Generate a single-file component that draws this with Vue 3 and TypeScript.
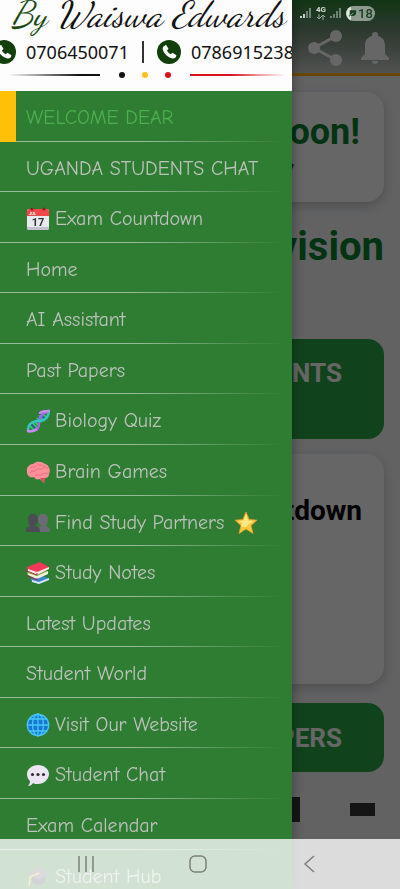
<script setup lang="ts">
import { ref } from 'vue'

interface MenuItem {
  label: string
  icon?: string
  trailing?: string
}

const active = ref('WELCOME DEAR')

const items: MenuItem[] = [
  { label: 'WELCOME DEAR' },
  { label: 'UGANDA STUDENTS CHAT' },
  { label: 'Exam Countdown', icon: 'calendar' },
  { label: 'Home' },
  { label: 'AI Assistant' },
  { label: 'Past Papers' },
  { label: 'Biology Quiz', icon: 'dna' },
  { label: 'Brain Games', icon: 'brain' },
  { label: 'Find Study Partners', icon: 'people', trailing: 'star' },
  { label: 'Study Notes', icon: 'books' },
  { label: 'Latest Updates' },
  { label: 'Student World' },
  { label: 'Visit Our Website', icon: 'globe' },
  { label: 'Student Chat', icon: 'chat' },
  { label: 'Exam Calendar' },
  { label: 'Student Hub', icon: 'cap' },
]
</script>

<template>
  <div class="app">
    <header class="topbar">
      <button class="icon-btn" aria-label="Share">
        <svg width="36" height="38" viewBox="0 0 36 38">
          <path d="M29 7 7 19l22 12" fill="none" stroke="#fff" stroke-width="3" />
          <circle cx="29" cy="7" r="6" fill="#fff" />
          <circle cx="7" cy="19" r="6" fill="#fff" />
          <circle cx="29" cy="31" r="6" fill="#fff" />
        </svg>
      </button>
      <button class="icon-btn" aria-label="Notifications">
        <svg width="28" height="32" viewBox="0 0 28 32">
          <path d="M14 0c2 0 3 1.300 3 3v1c5 1.300 7 5 7 10v8l4 4v2H0v-2l4-4v-8c0-5 2-8.700 7-10V3c0-1.700 1-3 3-3zM11 29h6c0 2-1.300 3-3 3s-3-1-3-3z" fill="#fff" />
        </svg>
      </button>
    </header>

    <main class="page">
      <section class="card greeting">
        <h1>Afternoon!</h1>
        <p>today</p>
      </section>
      <h2 class="headline">Revision</h2>
      <button class="action tall">STUDENTS</button>
      <section class="card countdown">
        <h3>Countdown</h3>
      </section>
      <button class="action">PAPERS</button>
      <div class="blocks"><i class="block square"></i><i class="block flat"></i></div>
    </main>

    <div class="scrim"></div>

    <aside class="drawer">
      <div class="banner">
        <div class="signature"><span>By</span> Waiswa Edwards</div>
        <div class="phones">
          <svg class="call" width="24" height="24" viewBox="0 0 24 24">
            <circle cx="12" cy="12" r="12" fill="#123f0b" />
            <path d="M6.500 6.500 9 4.800l2.500 4-1.500 1.800c.8 1.700 2 2.900 3.700 3.600l1.800-1.500 3.900 2.500c-.4 2.600-2.200 3.700-4.600 3C10.400 17 7 13.600 5.800 9.400c-.2-1.200 0-2.100.7-2.900z" fill="#fff" />
          </svg>
          <a href="tel:0706450071">0706450071</a>
          <i class="rule"></i>
          <svg class="call" width="24" height="24" viewBox="0 0 24 24">
            <circle cx="12" cy="12" r="12" fill="#123f0b" />
            <path d="M6.500 6.500 9 4.800l2.500 4-1.500 1.800c.8 1.700 2 2.900 3.700 3.600l1.800-1.500 3.900 2.500c-.4 2.600-2.200 3.700-4.600 3C10.400 17 7 13.600 5.800 9.400c-.2-1.200 0-2.100.7-2.900z" fill="#fff" />
          </svg>
          <a href="tel:0786915238">0786915238</a>
        </div>
        <svg class="flourish" width="292" height="8" viewBox="0 0 292 8">
          <path d="M8 4 80 3h20v2H80z" fill="#111" />
          <circle cx="122" cy="4" r="3" fill="#111" />
          <circle cx="145" cy="4" r="3" fill="#fcc21b" />
          <circle cx="168" cy="4" r="3" fill="#d8121c" />
          <path d="M190 3h40l56 1-56 1h-40z" fill="#d8121c" />
        </svg>
      </div>

      <nav aria-label="Main menu">
        <ul class="menu">
          <li v-for="item in items" :key="item.label" :class="{ active: item.label === active }">
            <a href="#" @click.prevent="active = item.label">
              <svg v-if="item.icon" class="emoji" viewBox="0 0 24 24">
                <g v-if="item.icon === 'calendar'">
                  <rect x="1" y="2" width="22" height="21" rx="2" fill="#e9e9f0" />
                  <path d="M1 9V4q0-2 2-2h18q2 0 2 2v5z" fill="#f4474b" />
                  <path d="M1 20h22v1q0 2-2 2H3q-2 0-2-2z" fill="#c3c3cf" />
                  <circle cx="6" cy="2" r="1.500" fill="#8d1d24" />
                  <circle cx="18" cy="2" r="1.500" fill="#8d1d24" />
                  <text x="3" y="8" font-size="4" font-weight="700" fill="#fff">JUL</text>
                  <text x="12" y="19" font-size="11" font-weight="700" text-anchor="middle" fill="#333">17</text>
                </g>
                <g v-else-if="item.icon === 'dna'" fill="none" stroke-linecap="round">
                  <path d="m4 17 4 4M7 14l4 5M13 7l5 5M16 4l4 4M11 9l4 4M9 13l4 4" stroke="#3ad06d" stroke-width="1.500" />
                  <path d="m5 15 5 5M14 5l5 5M12 8l5 4" stroke="#3352c8" stroke-width="1.500" />
                  <path d="M2 22c7 1 11-1 11-8 0-6 3-10 10-12" stroke="#9c6be0" stroke-width="2.400" />
                  <path d="M2 22c0-7 3-9 9-10 7 0 11-2 12-10" stroke="#34c6c1" stroke-width="2.400" />
                  <path d="M2 22c3 .5 6 0 8-1.500M14 4c2-2 5-2 9-2" stroke="#c98af0" stroke-width="2.400" />
                </g>
                <g v-else-if="item.icon === 'brain'">
                  <path d="M1 12C0 8 3 4 7 4c4-4 10-2 12 0 4 1 6 6 4 10 0 3-2 4-4 4l-1 5-4-4c-3 1-5 0-6-2-4 1-7-1-7-5z" fill="#ff8f98" />
                  <path d="M4 13c2-4 4 0 6-3s5 1 7-2 3 1 5 0M5 7c2-1 3 1 5-1M12 4c1 3 4 0 6 2M9 16c2-3 5 1 8-2 2-1 3 0 5-1" fill="none" stroke="#e0677a" stroke-width=".9" stroke-linecap="round" />
                  <path d="m14 18 5 0-1 5z" fill="#d94a60" />
                </g>
                <g v-else-if="item.icon === 'people'">
                  <path d="M11 21c0-4 1-5 4-6-2-2-3-4-3-7 0-3 2-5 5-5s5 2 5 5-1 5-2 7c3 1 4 2 4 6z" fill="#6b6b73" />
                  <path d="M0 21c0-4 1-5 4-6-2-2-2-4-2-7 0-3 2-5 5-5s5 2 5 5-1 5-3 7c4 1 5 2 5 6z" fill="#4c4c54" />
                </g>
                <g v-else-if="item.icon === 'books'">
                  <path d="m5 17 12-2 7 3-11 5-8-3z" fill="#3b86cf" />
                  <path d="m6 19 7 2 10-4v2l-10 4-7-2z" fill="#d9e9f6" />
                  <path d="m1 11 12-3 10 3-12 6-10-3z" fill="#7ba13a" />
                  <path d="m2 12 9 3 11-5v3l-11 5-9-4z" fill="#eef2dc" />
                  <path d="M1 6 14 1l9 5-12 6L1 9z" fill="#ee3957" />
                  <path d="m2 8 9 3 12-5v2l-12 6-9-3z" fill="#f7e5e3" />
                  <path d="M1 9v1l10 4v-2M2 14v1l9 4v-2" fill="none" stroke="#a42d3f" />
                </g>
                <g v-else-if="item.icon === 'globe'">
                  <circle cx="12" cy="12" r="11" fill="#1777d1" />
                  <g fill="none" stroke="#48c7f7" stroke-width="1.300">
                    <circle cx="12" cy="12" r="10.700" />
                    <ellipse cx="12" cy="12" rx="5.500" ry="11" />
                    <path d="M12 1v22M1 12h22M3 6h18M3 18h18" />
                  </g>
                </g>
                <g v-else-if="item.icon === 'chat'">
                  <path d="M12 2c6 0 11 4 11 9s-5 10-11 10c-2 0-4 0-5-1-1 2-3 3-5 3 1-1 2-3 2-5-2-2-3-4-3-7 0-5 5-9 11-9z" fill="#ece6f3" />
                  <circle cx="6.500" cy="11.500" r="1.600" fill="#33303a" />
                  <circle cx="12" cy="11.500" r="1.600" fill="#33303a" />
                  <circle cx="17.500" cy="11.500" r="1.600" fill="#33303a" />
                </g>
                <g v-else-if="item.icon === 'cap'">
                  <path d="M6 10v7c3 4 10 4 13 0v-7z" fill="#3d3d45" />
                  <path d="M0 8 13 2l11 6-11 7z" fill="#5c5c66" />
                  <path d="m13 8-9 4-1 9" fill="none" stroke="#f0a91d" stroke-width="1.500" />
                </g>
              </svg>
              <span>{{ item.label }}</span>
              <svg v-if="item.trailing" class="emoji trailing" viewBox="0 0 24 24">
                <path d="m12 1 3.200 7.500 7.800.7-6 5.300 2 8-7-4.500L5 22.500l2-8-6-5.300 7.800-.7z" fill="#fdc93a" stroke="#f09c2c" stroke-width=".8" stroke-linejoin="round" />
                <path d="m12 3 2.300 6.500 5 .7-5 3-2.300 3-5-1 1.500-3-4-2 5-.7z" fill="#ffe887" />
              </svg>
            </a>
          </li>
        </ul>
      </nav>
    </aside>

    <div class="status">
      <svg width="12" height="12" viewBox="0 0 12 12">
        <path d="M1 11V9M4 11V7" stroke="#fff" stroke-width="1.500" />
        <path d="M7 11V4M10 11V1" stroke="#8b9a8d" stroke-width="1.500" />
      </svg>
      <div class="network">
        <b>4G</b>
        <svg width="10" height="6" viewBox="0 0 10 6"><path d="M3 0v5M1 3l2 2 2-2M7 6V1M5 3l2-2 2 2" fill="none" stroke="#9aa89b" /></svg>
      </div>
      <svg width="12" height="12" viewBox="0 0 12 12">
        <path d="M1 11V9M4 11V7M7 11V4M10 11V1" stroke="#8b9a8d" stroke-width="1.500" />
      </svg>
      <div class="battery">
        <svg width="9" height="9" viewBox="0 0 10 9"><path d="M2 1h7v3c0 3-3 4-6 3L1 8l1-3z" fill="#17401c" /><path d="m2 7 4-3" stroke="#a3ada3" /></svg>
        <span>18</span>
      </div>
    </div>

    <div class="sysnav">
      <button aria-label="Recent apps">
        <svg width="18" height="18" viewBox="0 0 18 18"><path d="M2 1v16M9 1v16M16 1v16" stroke="#7c807c" stroke-width="1.500" /></svg>
      </button>
      <button aria-label="Home">
        <svg width="18" height="18" viewBox="0 0 18 18"><rect x="1" y="1" width="16" height="16" rx="5" fill="none" stroke="#7c807c" stroke-width="1.500" /></svg>
      </button>
      <button aria-label="Back">
        <svg width="18" height="18" viewBox="0 0 18 18"><path d="M13 1 4 9l9 8" fill="none" stroke="#7c807c" stroke-width="1.500" /></svg>
      </button>
    </div>
  </div>
</template>

<style>
body {
  background: #f4f5f8;
}
</style>

<style scoped>
* {
  box-sizing: border-box;
}
button {
  border: 0;
  padding: 0;
  background: none;
  font: inherit;
}
svg {
  display: block;
  flex: none;
}
h1,
h2,
h3,
p {
  margin: 0;
  font-weight: 700;
}
.app {
  height: 100vh;
  overflow: hidden;
  font-family: Roboto, sans-serif;
}
.topbar {
  display: flex;
  justify-content: flex-end;
  align-items: flex-end;
  gap: 18px;
  height: 76px;
  padding: 0 11px 6px;
  border-bottom: 3px solid #ffb300;
  background: linear-gradient(#2b8635, #7e9482 50%, #cacdca);
}
.icon-btn {
  display: flex;
  align-items: center;
  height: 38px;
}
.page {
  display: flex;
  flex-direction: column;
  padding: 16px;
  text-align: right;
}
.card {
  border-radius: 18px;
  background: #fff;
  box-shadow: 0 4px 12px rgba(0, 0, 0, 0.2);
}
.greeting {
  height: 110px;
  padding: 18px 24px;
  color: #08802d;
}
.greeting h1 {
  font-size: 36px;
  line-height: 44px;
}
.greeting p {
  padding-right: 66px;
  color: #333;
  font-size: 18px;
  font-weight: 400;
  line-height: 28px;
}
.headline {
  margin: 20px 0 68px;
  color: #08802d;
  font-size: 40px;
  line-height: 49px;
}
.action {
  height: 69px;
  padding: 0 42px;
  border-radius: 16px;
  background: #28a745;
  color: #fff;
  font-size: 26px;
  font-weight: 700;
  line-height: 30px;
  text-align: right;
}
.action.tall {
  height: 100px;
  padding-bottom: 32px;
}
.countdown {
  height: 230px;
  margin: 15px 0 19px;
  padding: 40px 22px;
}
.countdown h3 {
  font-size: 28px;
  line-height: 34px;
}
.blocks {
  display: flex;
  justify-content: flex-end;
  align-items: center;
  gap: 50px;
  padding: 25px 9px;
}
.block {
  width: 25px;
  height: 25px;
  background: #363636;
}
.block.flat {
  height: 13px;
}
.scrim {
  position: fixed;
  inset: 0;
  background: rgba(0, 0, 0, 0.6);
}
.drawer {
  position: fixed;
  inset: 0 auto 0 0;
  width: 73%;
  overflow: hidden;
  background: #2f7d32;
  box-shadow: 0 0 12px rgba(0, 0, 0, 0.4);
}
.banner {
  display: flex;
  flex-direction: column;
  height: 91px;
  background: #fdfdfd;
  overflow: hidden;
  white-space: nowrap;
}
.signature {
  height: 38px;
  padding-left: 11px;
  color: #111;
  font-family: "Dancing Script", "Liberation Serif", serif;
  font-size: 36px;
  font-style: italic;
  line-height: 30px;
}
.signature span {
  color: #174a12;
}
.phones {
  display: flex;
  align-items: center;
  gap: 10px;
  height: 28px;
  margin-left: -8px;
}
.phones a {
  color: #111;
  font-family: "Noto Sans", sans-serif;
  font-size: 18px;
  line-height: 28px;
  text-decoration: none;
}
.rule {
  flex: none;
  width: 2px;
  height: 22px;
  margin: 0 3px;
  background: #333;
}
.flourish {
  margin-top: 5px;
}
.menu {
  display: grid;
  grid-auto-rows: 51px 50px 51px 50px 51px 50px 51px;
  margin: 0;
  padding: 0;
  list-style: none;
}
.menu li {
  padding-left: 26px;
  background: linear-gradient(90deg, rgba(255, 255, 255, 0.5) 45%, rgba(255, 255, 255, 0) 97%) bottom / 100% 1px no-repeat;
}
.menu li.active {
  padding-left: 10px;
  border-left: 16px solid #ffc107;
}
.menu a {
  display: flex;
  align-items: center;
  gap: 5px;
  height: 100%;
  padding-top: 3px;
  color: #bec2be;
  font-family: "Comic Neue", Lato, sans-serif;
  font-size: 20px;
  line-height: 24px;
  text-decoration: none;
  white-space: nowrap;
}
.menu .active a {
  color: #4caf50;
}
.emoji {
  width: 24px;
  height: 24px;
  font-family: Roboto, sans-serif;
}
.emoji.trailing {
  margin-left: 5px;
}
.status {
  position: fixed;
  top: 5px;
  right: 25px;
  display: flex;
  align-items: center;
  gap: 4px;
  height: 16px;
  color: #d5dcd5;
}
.network {
  display: flex;
  flex-direction: column;
  align-items: center;
  font-size: 8px;
  line-height: 8px;
}
.battery {
  display: flex;
  align-items: center;
  justify-content: center;
  gap: 1px;
  width: 29px;
  height: 15px;
  border-radius: 8px;
  background: linear-gradient(90deg, #dde3dd 18%, #8e9a8f 18%);
  color: #17401c;
  font-size: 13px;
  font-weight: 500;
  line-height: 15px;
}
.sysnav {
  position: fixed;
  inset: auto 0 0 0;
  display: flex;
  justify-content: center;
  align-items: center;
  gap: 94px;
  height: 50px;
  padding-right: 4px;
  background: rgba(255, 255, 255, 0.78);
}
</style>
